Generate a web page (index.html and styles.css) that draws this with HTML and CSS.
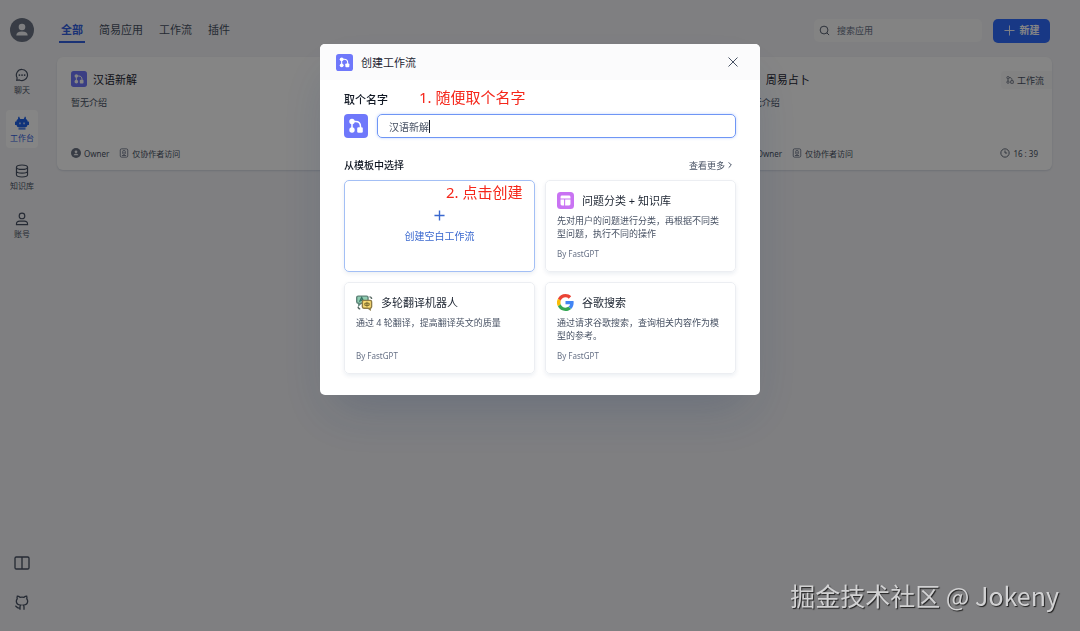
FILE: index.html
```html
<!DOCTYPE html>
<html lang="zh-CN">
<head>
  <meta charset="UTF-8">
  <meta name="viewport" content="width=device-width, initial-scale=1">
  <title>工作台</title>
  <link rel="stylesheet" href="styles.css">
</head>
<body>
  <svg class="sprite" aria-hidden="true">
    <symbol id="flow" viewBox="0 0 24 24">
      <rect width="24" height="24" rx="4" fill="#6f78fb"/>
      <g fill="none" stroke="#fff" stroke-width="1.500"><path d="M8 8v8M8 7.500h3.500c3.500 0 5 2 5 5v3"/></g>
      <g fill="#fff"><circle cx="8" cy="7.500" r="2.700"/><circle cx="8" cy="16" r="2.700"/><rect x="13.200" y="13.300" width="5.600" height="5.400" rx="1.300"/></g>
    </symbol>
    <symbol id="owner" viewBox="0 0 24 24">
      <circle cx="12" cy="12" r="12" fill="#6b7484"/>
      <circle cx="12" cy="9" r="3.300" fill="#f4f4f7"/>
      <path d="M6.300 17.500c0-2.800 2-4 5.700-4s5.700 1.200 5.700 4z" fill="#f4f4f7"/>
    </symbol>
    <symbol id="lock" viewBox="0 0 24 24">
      <g fill="none" stroke="#667085" stroke-width="2"><rect x="3" y="2" width="18" height="20" rx="3"/><rect x="9" y="6" width="6" height="9" rx="2"/><path d="M12 10v2M7 18h10"/></g>
    </symbol>
  </svg>

  <div class="layout">
    <nav class="sidebar">
      <svg class="avatar"><use href="#owner"/></svg>
      <a class="nav-item" href="#">
        <svg viewBox="0 0 24 24"><path d="M12 2.500a9.500 9.500 0 1 1-4.500 17.900L3 21.200l.6-4.500A9.500 9.500 0 0 1 12 2.500z"/><path class="dots" d="M7.500 12h.1M12 12h.1M16.500 12h.1"/></svg>
        聊天
      </a>
      <a class="nav-item active" href="#">
        <svg viewBox="0 0 24 24"><path class="solid" d="M5.500 1.500 7 1l2 4h6l2-4 1.500.5.300 3.500A4 4 0 0 1 21.500 8v1.500H23a1 1 0 0 1 1 1v4a1 1 0 0 1-1 1h-1.500A4.500 4.500 0 0 1 17 19.500H7a4.500 4.500 0 0 1-4.500-4H1a1 1 0 0 1-1-1v-4a1 1 0 0 1 1-1h1.500V8a4 4 0 0 1 2.700-3zM6 21h12v2H6z"/><path class="eyes" d="M8.500 11v3M15.500 11v3"/></svg>
        工作台
      </a>
      <a class="nav-item" href="#">
        <svg viewBox="0 0 24 24"><ellipse cx="12" cy="5.500" rx="9.500" ry="3.800"/><path d="M2.500 5.500v13c0 5 19 5 19 0v-13M2.500 12c0 5 19 5 19 0"/></svg>
        知识库
      </a>
      <a class="nav-item" href="#">
        <svg viewBox="0 0 24 24"><circle cx="12" cy="6.800" r="4.800"/><path d="M2.500 21.500v-1c0-3.500 2.500-5 5.500-5h8c3 0 5.500 1.500 5.500 5v1z"/></svg>
        账号
      </a>
      <div class="nav-links">
        <a href="#" aria-label="文档"><svg viewBox="0 0 24 24"><rect x="1.500" y="3" width="21" height="18" rx="2"/><path d="M12 3v18"/></svg></a>
        <a href="#" aria-label="GitHub"><svg viewBox="0 0 24 24"><path d="M9 22v-4.500c0-1 .3-1.700 1-2.300-3.500-.5-6.500-2-6.500-6 0-1.500.5-2.500 1.300-3.500-.4-1.200-.3-2.500.2-4 1.500 0 3 .8 4 1.800 1.700-.4 4.300-.4 6 0 1-1 2.500-1.800 4-1.800.5 1.500.6 2.800.2 4 .8 1 1.300 2 1.300 3.500 0 4-3 5.500-6.500 6 .7.600 1 1.300 1 2.300V22M9 19.500c-4.500 1-4.500-2.500-7-3"/></svg></a>
      </div>
    </nav>

    <main class="main">
      <header class="toolbar">
        <div class="tabs">
          <button class="tab active">全部</button>
          <button class="tab">简易应用</button>
          <button class="tab">工作流</button>
          <button class="tab">插件</button>
        </div>
        <label class="search">
          <svg viewBox="0 0 24 24"><circle cx="11" cy="11" r="8.500"/><path d="m17 17 5 5"/></svg>
          <input type="text" placeholder="搜索应用" aria-label="搜索应用">
        </label>
        <button class="create">
          <svg viewBox="0 0 24 24"><path d="M12 1v22M1 12h22"/></svg>
          新建
        </button>
      </header>

      <section class="apps">
        <article class="app">
          <h2><svg><use href="#flow"/></svg>汉语新解</h2>
          <p>暂无介绍</p>
          <footer>
            <span><svg><use href="#owner"/></svg>Owner</span>
            <span><svg><use href="#lock"/></svg>仅协作者访问</span>
          </footer>
        </article>
        <article class="app"></article>
        <article class="app">
          <h2><svg><use href="#flow"/></svg>周易占卜</h2>
          <div class="tag">
            <svg viewBox="0 0 24 24"><circle cx="6" cy="5" r="3.500"/><circle cx="6" cy="18.500" r="3.500"/><rect x="14" y="14" width="8" height="8" rx="1"/><path d="M6 9v6M9.500 5h3c4 0 5.500 3 5.500 9"/></svg>
            工作流
          </div>
          <p>暂无介绍</p>
          <footer>
            <span><svg><use href="#owner"/></svg>Owner</span>
            <span><svg><use href="#lock"/></svg>仅协作者访问</span>
            <span class="time"><svg viewBox="0 0 24 24"><circle cx="12" cy="12" r="10"/><path d="M12 6v6h5"/></svg>16 : 39</span>
          </footer>
        </article>
      </section>
    </main>
  </div>

  <div class="overlay">
    <div class="modal" role="dialog" aria-modal="true" aria-labelledby="modal-title">
      <header class="modal-header">
        <svg><use href="#flow"/></svg>
        <h1 id="modal-title">创建工作流</h1>
        <button class="close" aria-label="关闭"><svg viewBox="0 0 24 24"><path d="m3 3 18 18M21 3 3 21"/></svg></button>
      </header>
      <div class="modal-body">
        <label class="name-label" for="name">取个名字</label>
        <div class="name-row">
          <svg><use href="#flow"/></svg>
          <div class="name-field">
            <input id="name" type="text" value="汉语新解">
            <span class="caret"></span>
          </div>
        </div>
        <div class="templates-head">
          <h2>从模板中选择</h2>
          <a href="#">查看更多<svg viewBox="0 0 24 24"><path d="m8 4 8 8-8 8"/></svg></a>
        </div>
        <div class="templates">
          <button class="template blank">
            <svg viewBox="0 0 24 24"><path d="M12 1v22M1 12h22"/></svg>
            创建空白工作流
          </button>
          <article class="template">
            <h3>
              <svg viewBox="0 0 24 24"><rect width="24" height="24" rx="5" fill="#c973f3"/><g fill="#fff"><path d="M5 9V7a2 2 0 0 1 2-2h10a2 2 0 0 1 2 2v2zM5 10.500h5V19H7a2 2 0 0 1-2-2zM11.500 10.500H19V17a2 2 0 0 1-2 2h-5.500z"/></g></svg>
              问题分类 + 知识库
            </h3>
            <p>先对用户的问题进行分类，再根据不同类型问题，执行不同的操作</p>
            <small>By FastGPT</small>
          </article>
          <article class="template">
            <h3>
              <svg viewBox="0 0 24 24"><path d="M3 3h12a2 2 0 0 1 2 2v8H7l-3 3v-3H3a2 2 0 0 1-2-2V5a2 2 0 0 1 2-2z" fill="#8fcdb2" stroke="#5d8277"/><path d="m5 11 3-6 3 6M6 9h4" fill="none" stroke="#3a7565"/><path d="M11 9h9a2 2 0 0 1 2 2v7a2 2 0 0 1-2 2v2l-3-2h-6a2 2 0 0 1-2-2v-7a2 2 0 0 1 2-2z" fill="#f9da72" stroke="#8e7c45"/><path d="M12.500 13h6v3h-6zM15.500 11v7" fill="none" stroke="#6d6027" stroke-width="1.300"/><path d="M3 18c0 2 1 3 3 3M19 4c2 0 3 1 3 3" fill="none" stroke="#5c6c66"/></svg>
              多轮翻译机器人
            </h3>
            <p>通过 4 轮翻译，提高翻译英文的质量</p>
            <small>By FastGPT</small>
          </article>
          <article class="template">
            <h3>
              <svg viewBox="0 0 48 48"><path fill="#ea4335" d="M24 9.500c3.540 0 6.710 1.220 9.210 3.600l6.850-6.850C35.900 2.380 30.470 0 24 0 14.620 0 6.510 5.380 2.560 13.220l7.980 6.190C12.430 13.720 17.740 9.500 24 9.500z"/><path fill="#4285f4" d="M46.980 24.550c0-1.570-.15-3.090-.38-4.550H24v9.020h12.940c-.58 2.960-2.260 5.480-4.780 7.180l7.730 6c4.510-4.180 7.090-10.360 7.090-17.650z"/><path fill="#fbbc05" d="M10.530 28.590a14.500 14.500 0 0 1 0-9.180l-7.980-6.190a24 24 0 0 0 0 21.560z"/><path fill="#34a853" d="M24 48c6.480 0 11.930-2.130 15.890-5.810l-7.730-6C30.010 37.640 27.240 38.500 24 38.500c-6.260 0-11.570-4.220-13.470-9.910l-7.980 6.190C6.510 42.620 14.620 48 24 48z"/></svg>
              谷歌搜索
            </h3>
            <p>通过请求谷歌搜索，查询相关内容作为模型的参考。</p>
            <small>By FastGPT</small>
          </article>
        </div>
      </div>
      <span class="note note-name">1. 随便取个名字</span>
      <span class="note note-create">2. 点击创建</span>
    </div>
  </div>

  <div class="watermark">掘金技术社区 @ Jokeny</div>
</body>
</html>
```
FILE: styles.css
```css
* {
  box-sizing: border-box;
}
body {
  margin: 0;
  font-family: "Noto Sans", "Noto Sans CJK SC", sans-serif;
  font-size: 9px;
  line-height: 13px;
  color: #485264;
  background: #f4f4f7;
}
h1, h2, h3, p {
  margin: 0;
  font-weight: 400;
}
a {
  color: inherit;
  text-decoration: none;
}
button, input {
  font: inherit;
  color: inherit;
  border: 0;
  padding: 0;
  background: none;
}
svg {
  flex: none;
  fill: none;
  stroke: currentColor;
  stroke-width: 2;
}
symbol, use {
  stroke: none;
}
.sprite {
  display: none;
}

.layout {
  display: flex;
  min-height: 100vh;
}
.sidebar {
  width: 44px;
  padding: 18px 6px 20px;
  display: flex;
  flex-direction: column;
  align-items: center;
  gap: 10px;
}
.avatar {
  width: 24px;
  height: 24px;
  margin-bottom: 10px;
}
.nav-item {
  width: 32px;
  height: 38px;
  padding-top: 6px;
  display: flex;
  flex-direction: column;
  align-items: center;
  gap: 1px;
  font-size: 8px;
  border-radius: 4px;
}
.nav-item svg {
  width: 14px;
  height: 14px;
}
.nav-item.active {
  color: #3360e0;
  background: #fff;
}
.solid {
  fill: #1f62ea;
  stroke: none;
}
.eyes {
  stroke: #fff;
}
.dots {
  stroke-width: 3;
  stroke-linecap: round;
}
.nav-links {
  margin-top: auto;
  display: flex;
  flex-direction: column;
  gap: 24px;
}
.nav-links svg {
  display: block;
  width: 16px;
  height: 16px;
}

.main {
  flex: 1;
  padding: 18px 28px 18px 13px;
}
.toolbar {
  display: flex;
  align-items: center;
  gap: 11px;
  height: 25px;
  padding: 0 2px;
}
.tabs {
  flex: 1;
  display: flex;
  gap: 12px;
}
.tab {
  padding: 0 2px;
  height: 25px;
  font-size: 11px;
  border-bottom: 2px solid transparent;
}
.tab.active {
  font-weight: 700;
  color: #3360e0;
  border-color: #3360e0;
}
.search {
  width: 168px;
  height: 23px;
  padding: 0 5px;
  display: flex;
  align-items: center;
  gap: 7px;
  background: #fbfbfc;
  border-radius: 5px;
}
.search svg {
  width: 11px;
  height: 11px;
}
.search input {
  width: 100%;
}
.search input::placeholder {
  color: #667085;
}
.create {
  width: 57px;
  height: 24px;
  display: flex;
  align-items: center;
  justify-content: center;
  gap: 5px;
  font-size: 10px;
  font-weight: 700;
  color: #fff;
  background: #2f6bff;
  border-radius: 5px;
}
.create svg {
  width: 11px;
  height: 11px;
}
.apps {
  margin-top: 14px;
  display: grid;
  grid-template-columns: repeat(3, 1fr);
  gap: 14px;
}
.app {
  position: relative;
  min-height: 113px;
  padding: 14px;
  display: flex;
  flex-direction: column;
  background: #fff;
  border-radius: 6px;
  box-shadow: 0 1px 2px rgba(19, 51, 107, 0.15);
}
.app h2 {
  display: flex;
  align-items: center;
  gap: 6px;
  height: 16px;
  font-size: 11px;
  color: #1d2532;
}
.app h2 svg {
  width: 16px;
  height: 16px;
}
.app p {
  margin-top: 9px;
}
.app footer {
  margin-top: auto;
  height: 6px;
  display: flex;
  align-items: center;
  gap: 10px;
  font-size: 8px;
}
.app footer span {
  display: flex;
  align-items: center;
  gap: 3px;
}
.app footer svg {
  width: 10px;
  height: 10px;
}
.app footer .time {
  margin-left: auto;
}
.tag {
  position: absolute;
  top: 14px;
  right: 0;
  height: 18px;
  padding: 0 8px 0 5px;
  display: flex;
  align-items: center;
  gap: 3px;
  background: #f9f9fa;
  border-radius: 4px 0 0 4px;
}
.tag svg {
  width: 8px;
  height: 8px;
}

.overlay {
  position: fixed;
  inset: 0;
  padding-top: 44px;
  display: flex;
  justify-content: center;
  align-items: flex-start;
  background: rgba(0, 0, 0, 0.48);
}
.modal {
  position: relative;
  width: 440px;
  background: #fff;
  border-radius: 5px;
  box-shadow: 0 24px 48px -9px rgba(19, 51, 107, 0.2);
}
.modal-header {
  display: flex;
  align-items: center;
  gap: 8px;
  height: 36px;
  padding: 0 21px 0 16px;
  background: #fbfbfc;
  border-radius: 5px 5px 0 0;
}
.modal-header > svg {
  width: 17px;
  height: 17px;
}
.modal-header h1 {
  flex: 1;
  font-size: 11px;
  color: #1d2532;
}
.close svg {
  display: block;
  width: 12px;
  height: 12px;
}
.modal-body {
  padding: 12px 24px 21px;
}
.name-label {
  display: block;
  height: 16px;
  line-height: 16px;
  font-size: 11px;
  font-weight: 500;
  color: #111824;
}
.name-row {
  margin-top: 6px;
  display: flex;
  gap: 9px;
}
.name-row > svg {
  width: 24px;
  height: 24px;
}
.name-field {
  position: relative;
  flex: 1;
}
.name-field input {
  display: block;
  width: 100%;
  height: 24px;
  padding: 0 11px;
  font-size: 10px;
  border: 1px solid #6f96f5;
  border-radius: 5px;
  box-shadow: 0 0 3px rgba(51, 112, 255, 0.3);
}
.caret {
  position: absolute;
  top: 6px;
  left: 52px;
  width: 1px;
  height: 13px;
  background: #111824;
}
.templates-head {
  margin: 20px 0 8px;
  height: 14px;
  display: flex;
  justify-content: space-between;
  align-items: center;
}
.templates-head h2 {
  font-size: 10px;
  font-weight: 500;
  color: #111824;
}
.templates-head a {
  display: flex;
  align-items: center;
  gap: 1px;
  padding-right: 2px;
}
.templates-head svg {
  width: 8px;
  height: 8px;
  stroke-width: 3;
}
.templates {
  display: grid;
  grid-template-columns: 1fr 1fr;
  gap: 10px;
}
.template {
  min-height: 92px;
  padding: 11px;
  display: flex;
  flex-direction: column;
  border: 1px solid #eceef2;
  border-radius: 5px;
  box-shadow: 0 2px 4px rgba(19, 51, 107, 0.08);
}
.template.blank {
  padding: 0;
  align-items: center;
  justify-content: center;
  gap: 9px;
  font-size: 10px;
  color: #3a68cf;
  border-color: #a3bff5;
}
.blank svg {
  width: 11px;
  height: 11px;
  stroke-width: 3;
}
.template h3 {
  display: flex;
  align-items: center;
  gap: 8px;
  height: 17px;
  font-size: 11px;
  color: #1d2532;
}
.template h3 svg {
  width: 17px;
  height: 17px;
  stroke: none;
}
.template p {
  margin-top: 5px;
}
.template small {
  margin-top: auto;
  font-size: 8px;
  color: #667085;
}
.note {
  position: absolute;
  font-size: 15px;
  line-height: 20px;
  color: #f5271b;
}
.note-name {
  top: 43px;
  left: 99px;
}
.note-create {
  top: 138px;
  left: 126px;
}
.watermark {
  position: fixed;
  right: 21px;
  bottom: 18px;
  font-family: "Noto Sans CJK SC", sans-serif;
  font-size: 25px;
  line-height: 36px;
  color: #d2d2d3;
  text-shadow: 1px 1px 1px #222;
}
```
